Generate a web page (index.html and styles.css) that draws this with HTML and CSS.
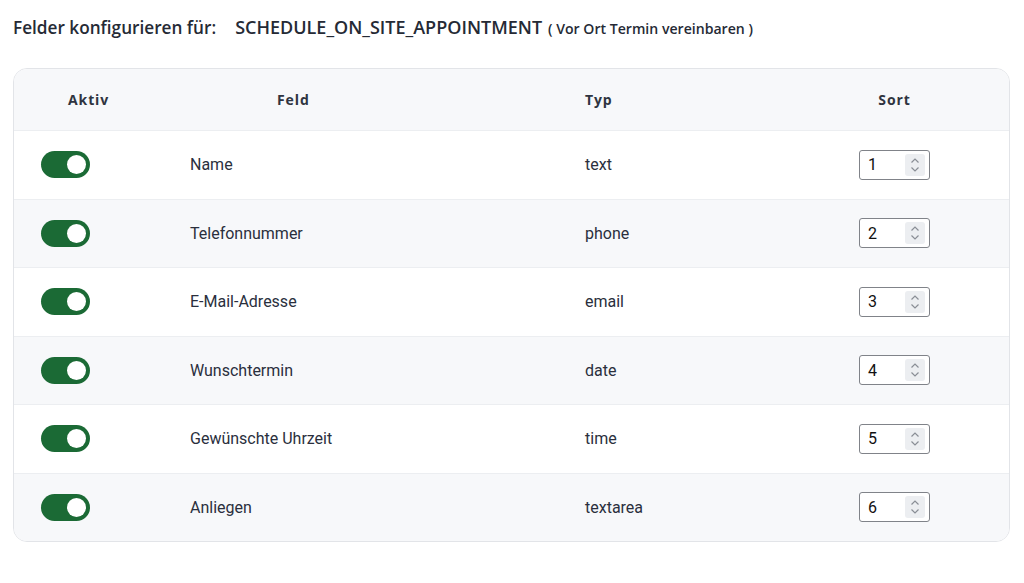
FILE: index.html
```html
<!DOCTYPE html>
<html lang="de">

<head>
    <meta charset="UTF-8">
    <meta name="viewport" content="width=device-width, initial-scale=1.0">
    <title>Felder konfigurieren</title>
    <link rel="stylesheet" href="styles.css">
</head>

<body>
    <div class="page">
        <h1 class="title">
            <span class="label">Felder konfigurieren für:</span>
            <span class="code">SCHEDULE_ON_SITE_APPOINTMENT</span>
            <span class="sub">( Vor Ort Termin vereinbaren )</span>
        </h1>

        <div class="fields">
            <div class="row head">
                <div class="cell c-active">Aktiv</div>
                <div class="cell c-field">Feld</div>
                <div class="cell c-type">Typ</div>
                <div class="cell c-sort">Sort</div>
            </div>

            <div class="row">
                <div class="cell c-active"><label class="switch"><input type="checkbox" checked><i></i></label></div>
                <div class="cell c-field">Name</div>
                <div class="cell c-type">text</div>
                <div class="cell c-sort"><span class="num"><b>1</b><em></em></span></div>
            </div>
            <div class="row">
                <div class="cell c-active"><label class="switch"><input type="checkbox" checked><i></i></label></div>
                <div class="cell c-field">Telefonnummer</div>
                <div class="cell c-type">phone</div>
                <div class="cell c-sort"><span class="num"><b>2</b><em></em></span></div>
            </div>
            <div class="row">
                <div class="cell c-active"><label class="switch"><input type="checkbox" checked><i></i></label></div>
                <div class="cell c-field">E-Mail-Adresse</div>
                <div class="cell c-type">email</div>
                <div class="cell c-sort"><span class="num"><b>3</b><em></em></span></div>
            </div>
            <div class="row">
                <div class="cell c-active"><label class="switch"><input type="checkbox" checked><i></i></label></div>
                <div class="cell c-field">Wunschtermin</div>
                <div class="cell c-type">date</div>
                <div class="cell c-sort"><span class="num"><b>4</b><em></em></span></div>
            </div>
            <div class="row">
                <div class="cell c-active"><label class="switch"><input type="checkbox" checked><i></i></label></div>
                <div class="cell c-field">Gewünschte Uhrzeit</div>
                <div class="cell c-type">time</div>
                <div class="cell c-sort"><span class="num"><b>5</b><em></em></span></div>
            </div>
            <div class="row">
                <div class="cell c-active"><label class="switch"><input type="checkbox" checked><i></i></label></div>
                <div class="cell c-field">Anliegen</div>
                <div class="cell c-type">textarea</div>
                <div class="cell c-sort"><span class="num"><b>6</b><em></em></span></div>
            </div>
        </div>
    </div>
</body>

</html>
```

FILE: styles.css
```css
* {
    margin: 0;
    padding: 0;
    box-sizing: border-box;
}

body {
    background: #fff;
    color: #2a2f3d;
    font-family: Roboto, "Liberation Sans", sans-serif;
}

.page {
    padding: 14px 14px 0 13px;
}

/* 标题 */
.title {
    display: flex;
    align-items: baseline;
    font-family: "Open Sans", "Noto Sans", sans-serif;
    font-weight: 600;
    font-size: 17.2px;
    line-height: 26px;
    color: #252a35;
}

.title .code {
    margin-left: 19px;
    font-size: 18px;
}

.title .sub {
    margin-left: 6px;
    font-size: 14.1px;
}

/* 表格 */
.fields {
    margin-top: 26px;
    border: 1px solid #e2e4e8;
    border-radius: 14px;
    overflow: hidden;
}

.row {
    display: grid;
    grid-template-columns: 149px 395px 222px 1fr;
    height: 68.5px;
    align-items: center;
    border-top: 1px solid #eceef1;
}

.row:nth-child(odd) {
    background: #f7f8fa;
}

.row.head {
    height: 61px;
    border-top: 0;
    background: #f7f8fa;
    font-family: "Open Sans", "Noto Sans", sans-serif;
    font-weight: 700;
    color: #2f3440;
}

.cell {
    font-size: 16px;
}

.row.head .cell {
    font-size: 14px;
    letter-spacing: 0.9px;
}

.c-active,
.c-field,
.c-type {
    padding-left: 27px;
}

.c-sort {
    display: flex;
    justify-content: center;
}

.head .c-active {
    padding-left: 54px;
}

.head .c-field {
    padding-left: 114px;
}

/* 开关 */
.switch {
    display: block;
    position: relative;
    width: 49px;
    height: 27px;
}

.switch input {
    display: none;
}

.switch i {
    display: block;
    width: 100%;
    height: 100%;
    border-radius: 14px;
    background: #c9ccd1;
}

.switch input:checked + i {
    background: #1b6a35;
}

.switch i::after {
    content: "";
    position: absolute;
    top: 4px;
    left: 4px;
    width: 19px;
    height: 19px;
    border-radius: 50%;
    background: #fff;
}

.switch input:checked + i::after {
    left: 26px;
}

/* 数字框 */
.num {
    display: flex;
    align-items: center;
    justify-content: space-between;
    width: 71px;
    height: 30px;
    padding: 0 4px 0 8px;
    border: 1px solid #808389;
    border-radius: 3px;
    background: #fff;
}

.num b {
    font-weight: 400;
    font-size: 16px;
    color: #111;
}

.num em {
    width: 20px;
    height: 22px;
    border-radius: 3px;
    background: #eceef1 url("data:image/svg+xml,%3Csvg xmlns='http://www.w3.org/2000/svg' width='20' height='22'%3E%3Cpath d='M6.5 8.5 10 5l3.5 3.5M6.5 13.5 10 17l3.5-3.5' fill='none' stroke='%238a8e96' stroke-width='1.2'/%3E%3C/svg%3E") no-repeat center;
}
```
